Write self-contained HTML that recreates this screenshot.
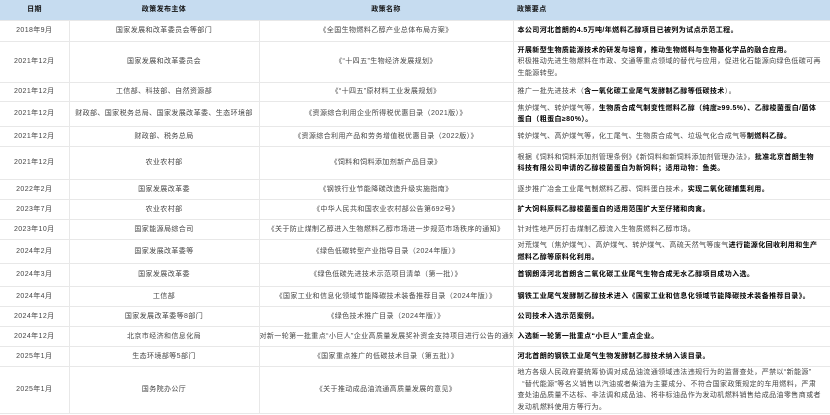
<!DOCTYPE html>
<html><head><meta charset="utf-8">
<style>
html,body{margin:0;padding:0;background:#fff;}
body{width:830px;height:415px;overflow:hidden;font-family:"Liberation Sans","Noto Sans CJK SC",sans-serif;font-size:7px;color:#444;letter-spacing:0.4px;}
table{border-collapse:collapse;table-layout:fixed;width:830px;}
td{border:1px solid #e8e8e8;padding:0;line-height:11.5px;white-space:nowrap;overflow:hidden;}
tr td:first-child{border-left:none;}
tr td:last-child{border-right:none;}
td.c{text-align:center;}
td.l{text-align:left;padding-left:4px;}
thead td{background:#c6dcf0;font-weight:bold;color:#111;height:20px;border:none;}
b{color:#000;}
</style></head><body>
<table>
<colgroup><col style="width:69px"><col style="width:190px"><col style="width:254px"><col style="width:317px"></colgroup>
<thead><tr><td class="c">日期</td><td class="c">政策发布主体</td><td class="c">政策名称</td><td class="l">政策要点</td></tr></thead>
<tbody>
<tr style="height:21px"><td class="c">2018年9月</td><td class="c">国家发展和改革委员会等部门</td><td class="c">《全国生物燃料乙醇产业总体布局方案》</td><td class="l"><b>本公司河北首朗的4.5万吨/年燃料乙醇项目已被列为试点示范工程。</b></td></tr>
<tr style="height:41px"><td class="c">2021年12月</td><td class="c">国家发展和改革委员会</td><td class="c">《“十四五”生物经济发展规划》</td><td class="l"><b>开展新型生物质能源技术的研发与培育，推动生物燃料与生物基化学品的融合应用。</b><br>积极推动先进生物燃料在市政、交通等重点领域的替代与应用，促进化石能源向绿色低碳可再<br>生能源转型。</td></tr>
<tr style="height:19px"><td class="c">2021年12月</td><td class="c">工信部、科技部、自然资源部</td><td class="c">《“十四五”原材料工业发展规划》</td><td class="l">推广一批先进技术（<b>含一氧化碳工业尾气发酵制乙醇等低碳技术</b>）。</td></tr>
<tr style="height:25px"><td class="c">2021年12月</td><td class="c">财政部、国家税务总局、国家发展改革委、生态环境部</td><td class="c">《资源综合利用企业所得税优惠目录（2021版）》</td><td class="l">焦炉煤气、转炉煤气等，<b>生物质合成气制变性燃料乙醇（纯度≥99.5%）、乙醇梭菌蛋白/菌体<br>蛋白（粗蛋白≥80%）。</b></td></tr>
<tr style="height:20px"><td class="c">2021年12月</td><td class="c">财政部、税务总局</td><td class="c">《资源综合利用产品和劳务增值税优惠目录（2022版）》</td><td class="l">转炉煤气、高炉煤气等，化工尾气、生物质合成气、垃圾气化合成气等<b>制燃料乙醇。</b></td></tr>
<tr style="height:33px"><td class="c">2021年12月</td><td class="c">农业农村部</td><td class="c">《饲料和饲料添加剂新产品目录》</td><td class="l">根据《饲料和饲料添加剂管理条例》《新饲料和新饲料添加剂管理办法》，<b>批准北京首朗生物<br>科技有限公司申请的乙醇梭菌蛋白为新饲料；适用动物：鱼类。</b></td></tr>
<tr style="height:20px"><td class="c">2022年2月</td><td class="c">国家发展改革委</td><td class="c">《钢铁行业节能降碳改造升级实施指南》</td><td class="l">逐步推广冶金工业尾气制燃料乙醇、饲料蛋白技术，<b>实现二氧化碳捕集利用。</b></td></tr>
<tr style="height:20px"><td class="c">2023年7月</td><td class="c">农业农村部</td><td class="c">《中华人民共和国农业农村部公告第692号》</td><td class="l"><b>扩大饲料原料乙醇梭菌蛋白的适用范围扩大至仔猪和肉禽。</b></td></tr>
<tr style="height:20px"><td class="c">2023年10月</td><td class="c">国家能源局综合司</td><td class="c">《关于防止煤制乙醇进入生物燃料乙醇市场进一步规范市场秩序的通知》</td><td class="l">针对性地严厉打击煤制乙醇流入生物质燃料乙醇市场。</td></tr>
<tr style="height:24px"><td class="c">2024年2月</td><td class="c">国家发展改革委等</td><td class="c">《绿色低碳转型产业指导目录（2024年版）》</td><td class="l">对荒煤气（焦炉煤气）、高炉煤气、转炉煤气、高硫天然气等废气<b>进行能源化回收利用和生产<br>燃料乙醇等原料化利用。</b></td></tr>
<tr style="height:23px"><td class="c">2024年3月</td><td class="c">国家发展改革委</td><td class="c">《绿色低碳先进技术示范项目清单（第一批）》</td><td class="l"><b>首钢朗泽河北首朗含二氧化碳工业尾气生物合成无水乙醇项目成功入选。</b></td></tr>
<tr style="height:20px"><td class="c">2024年4月</td><td class="c">工信部</td><td class="c">《国家工业和信息化领域节能降碳技术装备推荐目录（2024年版）》</td><td class="l"><b>钢铁工业尾气发酵制乙醇技术进入《国家工业和信息化领域节能降碳技术装备推荐目录》。</b></td></tr>
<tr style="height:20px"><td class="c">2024年12月</td><td class="c">国家发展改革委等8部门</td><td class="c">《绿色技术推广目录（2024年版）》</td><td class="l"><b>公司技术入选示范案例。</b></td></tr>
<tr style="height:20px"><td class="c">2024年12月</td><td class="c">北京市经济和信息化局</td><td style="text-align:left">对新一轮第一批重点“小巨人”企业高质量发展奖补资金支持项目进行公告的通知</td><td class="l"><b>入选新一轮第一批重点“小巨人”重点企业。</b></td></tr>
<tr style="height:20px"><td class="c">2025年1月</td><td class="c">生态环境部等5部门</td><td class="c">《国家重点推广的低碳技术目录（第五批）》</td><td class="l"><b>河北首朗的钢铁工业尾气生物发酵制乙醇技术纳入该目录。</b></td></tr>
<tr style="height:46px"><td class="c">2025年1月</td><td class="c">国务院办公厅</td><td class="c">《关于推动成品油流通高质量发展的意见》</td><td class="l">地方各级人民政府要统筹协调对成品油流通领域违法违规行为的监督查处，严禁以“新能源”<br>&nbsp;&nbsp;“替代能源”等名义销售以汽油或者柴油为主要成分、不符合国家政策规定的车用燃料，严肃<br>查处油品质量不达标、非法调和成品油、将非标油品作为发动机燃料销售给成品油零售商或者<br>发动机燃料使用方等行为。</td></tr>
</tbody></table>
</body></html>
